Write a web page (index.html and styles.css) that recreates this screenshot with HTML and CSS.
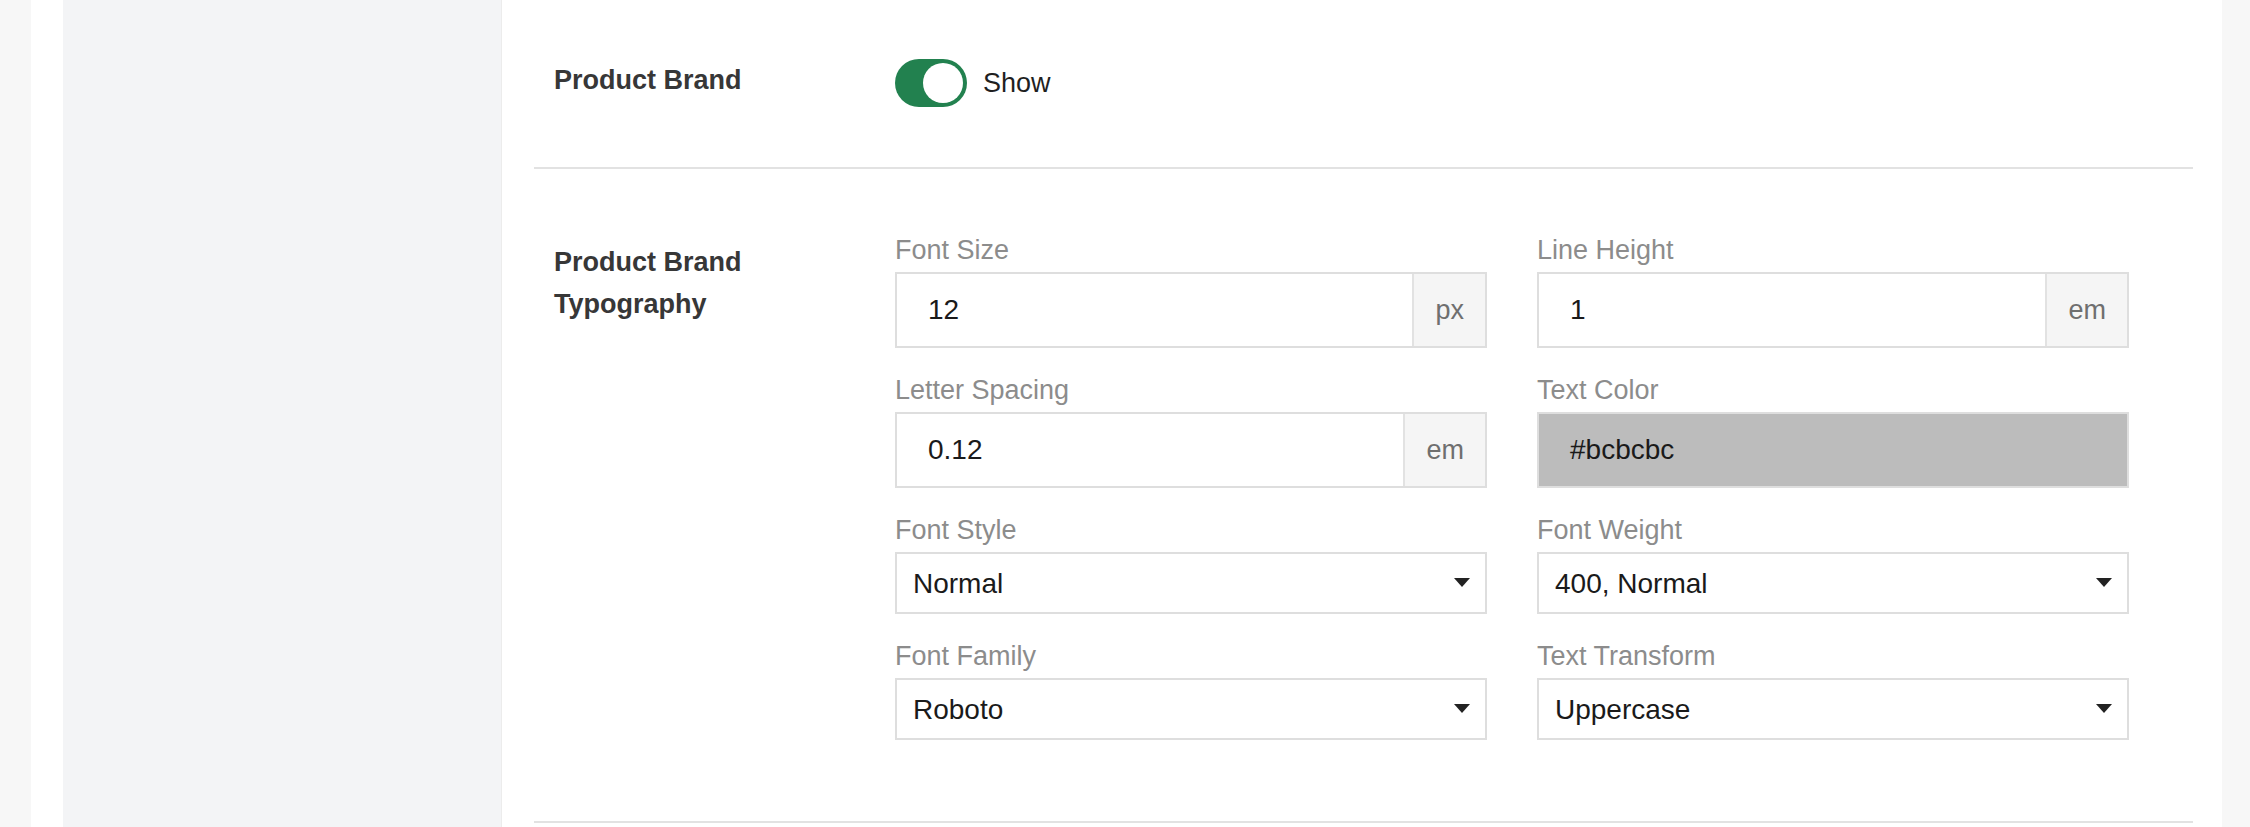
FILE: index.html
```html
<!DOCTYPE html>
<html lang="en">
<head>
<meta charset="utf-8">
<title>Product Brand Settings</title>
<link rel="stylesheet" href="styles.css">
</head>
<body>
<div class="page">
  <aside class="sidebar"></aside>
  <main class="content">
    <section class="row row-toggle">
      <div class="row-label">Product Brand</div>
      <div class="toggle-group">
        <span class="toggle"><span class="knob"></span></span>
        <span class="toggle-text">Show</span>
      </div>
    </section>
    <section class="row row-typo">
      <div class="row-label row-label-typo">Product Brand<br>Typography</div>
      <div class="fields">
        <div class="field">
          <div class="field-label">Font Size</div>
          <div class="input">
            <span class="input-value">12</span>
            <span class="addon">px</span>
          </div>
        </div>
        <div class="field">
          <div class="field-label">Line Height</div>
          <div class="input">
            <span class="input-value">1</span>
            <span class="addon">em</span>
          </div>
        </div>
        <div class="field">
          <div class="field-label">Letter Spacing</div>
          <div class="input">
            <span class="input-value">0.12</span>
            <span class="addon">em</span>
          </div>
        </div>
        <div class="field">
          <div class="field-label">Text Color</div>
          <div class="input input-color">
            <span class="input-value">#bcbcbc</span>
          </div>
        </div>
        <div class="field">
          <div class="field-label">Font Style</div>
          <div class="select">
            <span class="select-value">Normal</span>
            <span class="caret"></span>
          </div>
        </div>
        <div class="field">
          <div class="field-label">Font Weight</div>
          <div class="select">
            <span class="select-value">400, Normal</span>
            <span class="caret"></span>
          </div>
        </div>
        <div class="field">
          <div class="field-label">Font Family</div>
          <div class="select">
            <span class="select-value">Roboto</span>
            <span class="caret"></span>
          </div>
        </div>
        <div class="field">
          <div class="field-label">Text Transform</div>
          <div class="select">
            <span class="select-value">Uppercase</span>
            <span class="caret"></span>
          </div>
        </div>
      </div>
    </section>
  </main>
</div>
</body>
</html>
```

FILE: styles.css
```css
* {
  box-sizing: border-box;
}

html, body {
  margin: 0;
  padding: 0;
}

body {
  background: #f7f7f7;
  font-family: "Liberation Sans", Arial, sans-serif;
  color: #1c1c1c;
  overflow: hidden;
}

.page {
  display: flex;
  margin: 0 28px 0 31px;
  padding-left: 32px;
  min-height: 827px;
  background: #ffffff;
}

.sidebar {
  width: 439px;
  flex: 0 0 439px;
  background: #f3f4f6;
  border-right: 1px solid #ececec;
}

.content {
  flex: 1;
  padding: 0 29px 0 32px;
}

.row {
  display: flex;
  align-items: flex-start;
  border-bottom: 2px solid #e2e2e2;
  padding-left: 20px;
}

.row-toggle {
  padding-top: 59px;
  padding-bottom: 60px;
}

.row-typo {
  padding-top: 63px;
  padding-bottom: 81px;
}

.row-label {
  width: 341px;
  flex: 0 0 341px;
  font-size: 27px;
  line-height: 42px;
  font-weight: 700;
  color: #373737;
}

.row-label-typo {
  padding-top: 9px;
}

.toggle-group {
  display: flex;
  align-items: center;
  gap: 16px;
}

.toggle {
  display: block;
  width: 72px;
  height: 48px;
  border-radius: 24px;
  background: #22814f;
  position: relative;
}

.knob {
  position: absolute;
  top: 4px;
  right: 4px;
  width: 40px;
  height: 40px;
  border-radius: 50%;
  background: #ffffff;
}

.toggle-text {
  font-size: 27px;
  line-height: 36px;
  color: #1f1f1f;
}

.fields {
  display: grid;
  grid-template-columns: 592px 592px;
  column-gap: 50px;
  row-gap: 24px;
}

.field-label {
  font-size: 27px;
  line-height: 36px;
  color: #8c8c8c;
  margin-bottom: 4px;
}

.input {
  display: flex;
  height: 76px;
  border: 2px solid #dedede;
  background: #ffffff;
}

.input-value {
  flex: 1;
  display: flex;
  align-items: center;
  padding-left: 31px;
  font-size: 28px;
  color: #1a1a1a;
}

.addon {
  display: flex;
  align-items: center;
  padding: 0 21px;
  background: #f5f5f5;
  border-left: 2px solid #e2e2e2;
  font-size: 27px;
  color: #6f6f6f;
}

.input-color {
  background: #bcbcbc;
}

.select {
  display: flex;
  align-items: center;
  justify-content: space-between;
  height: 62px;
  border: 2px solid #dedede;
  background: #ffffff;
  padding: 2px 15px 0 16px;
}

.select-value {
  font-size: 28px;
  color: #1a1a1a;
}

.caret {
  width: 0;
  height: 0;
  border-left: 8px solid transparent;
  border-right: 8px solid transparent;
  border-top: 9px solid #222222;
  margin-top: -4px;
}
```
